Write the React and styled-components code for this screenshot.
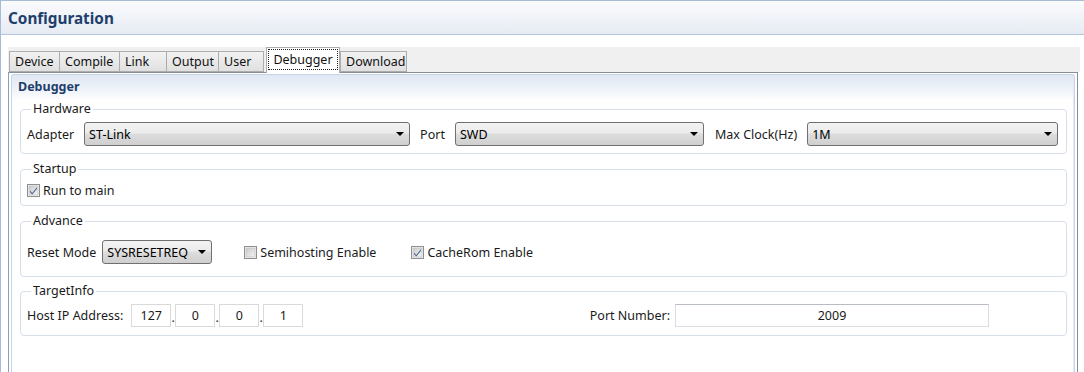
import React from "react";
import styled, { createGlobalStyle } from "styled-components";

const Global = createGlobalStyle`
  html, body { margin: 0; padding: 0; background: #ffffff; }
  body { font-family: "Noto Sans", "Liberation Sans", sans-serif; font-size: 12.5px; color: #1a1a1a; }
`;

const Page = styled.div`
  width: 1084px;
  height: 372px;
  box-sizing: border-box;
  border-top: 1px solid #a7bbd6;
  border-left: 1px solid #a7bbd6;
  overflow: hidden;
  background: #ffffff;
`;

const Header = styled.div`
  height: 34px;
  box-sizing: border-box;
  border-bottom: 1px solid #b6c7dc;
  background: linear-gradient(#fafbfd, #e6ebf3);
  display: flex;
  align-items: center;
  padding-left: 7px;
`;

const Title = styled.h1`
  margin: 0;
  font-size: 15.3px;
  font-weight: 700;
  color: #1e3e6c;
`;

const Body = styled.div`
  padding: 12px 4px 0 7px;
`;

const TabStrip = styled.div`
  height: 25px;
  background: #f0f0f0;
  display: flex;
  align-items: flex-end;
  padding-left: 1px;
  position: relative;
  z-index: 1;
`;

const Tab = styled.div`
  box-sizing: border-box;
  width: ${(p) => p.$w}px;
  height: ${(p) => (p.$active ? 26 : 21)}px;
  margin-left: ${(p) => p.$ml || 0}px;
  margin-bottom: ${(p) => (p.$active ? -1 : 0)}px;
  border: 1px solid #acacac;
  border-bottom: ${(p) => (p.$active ? "none" : "1px solid #acacac")};
  border-left: ${(p) => (p.$noLeft ? "none" : "1px solid #acacac")};
  background: ${(p) => (p.$active ? "#ffffff" : "linear-gradient(#f2f2f2, #e0e0e0)")};
  display: flex;
  align-items: ${(p) => (p.$active ? "flex-start" : "center")};
  padding: ${(p) => (p.$active ? "1px 1px 0" : "0 0 0 5px")};
  font-size: 12.5px;
  color: #111;
  white-space: nowrap;
`;

const Focus = styled.span`
  flex: 1;
  height: 21px;
  box-sizing: border-box;
  border: 1px dotted #222;
  display: flex;
  align-items: center;
  justify-content: center;
`;

const Panel = styled.div`
  box-sizing: border-box;
  width: 1070px;
  height: 320px;
  border: 1px solid #8a8e98;
  border-left-color: #8a9cb8;
  padding: 1px 2px 0 2px;
  background: #ffffff;
`;

const Inner = styled.div`
  height: 100%;
  box-sizing: border-box;
  border: 1px solid #c8d5e7;
  border-bottom: none;
  border-radius: 3px 3px 0 0;
  box-shadow: inset -1px 0 0 #e3eaf4;
  background: linear-gradient(#dfe7f3 0px, #f3f6fa 18px, #ffffff 26px);
  padding: 0 7px 0 8px;
`;

const SectionTitle = styled.div`
  height: 26px;
  line-height: 23px;
  margin-left: -2px;
  font-weight: 700;
  font-size: 12.5px;
  color: #1e3e6c;
`;

const Group = styled.fieldset`
  margin: ${(p) => p.$mt || 0}px 0 0 0;
  border: 1px solid #d6dfea;
  border-radius: 4px;
  padding: ${(p) => p.$pt}px 6px ${(p) => p.$pb}px 6px;
  min-width: 0;
`;

const Legend = styled.legend`
  padding: 0 2px;
  margin-left: 4px;
  font-size: 12.5px;
  line-height: 16px;
  color: #1a1a1a;
`;

const Row = styled.div`
  display: flex;
  align-items: center;
  gap: ${(p) => p.$gap ?? 10}px;
  height: ${(p) => p.$h || 24}px;
`;

const Label = styled.span`
  white-space: nowrap;
  color: #1a1a1a;
  margin-left: ${(p) => p.$ml || 0}px;
`;

const SelectBox = styled.div`
  box-sizing: border-box;
  width: ${(p) => p.$w}px;
  height: 24px;
  border: 1px solid #707070;
  border-radius: 3px;
  background: linear-gradient(#f3f3f3 0%, #ebebeb 45%, #dddddd 50%, #cfcfcf 100%);
  display: flex;
  align-items: center;
  justify-content: space-between;
  padding: 0 5px 0 4px;
  color: #000;
  margin-left: ${(p) => p.$ml || 0}px;
`;

const Arrow = styled.span`
  width: 0;
  height: 0;
  border-left: 4px solid transparent;
  border-right: 4px solid transparent;
  border-top: 4px solid #000;
`;

const Check = styled.label`
  display: flex;
  align-items: center;
  gap: 3px;
  margin-left: ${(p) => p.$ml || 0}px;
  white-space: nowrap;
`;

const IpBox = styled.div`
  box-sizing: border-box;
  width: 40px;
  height: 23px;
  border: 1px solid #dadada;
  display: flex;
  align-items: center;
  justify-content: center;
  color: #1a1a1a;
  margin-left: ${(p) => p.$ml || 0}px;
`;

const Dot = styled.span`
  width: 4px;
  text-align: center;
  align-self: flex-end;
  line-height: 18px;
`;

const Spacer = styled.div`
  flex: 1;
`;

const TextInput = styled.div`
  box-sizing: border-box;
  width: ${(p) => p.$w}px;
  height: 23px;
  border: 1px solid #dadde2;
  border-top-color: #b8bcc3;
  display: flex;
  align-items: center;
  justify-content: center;
  margin: 0 ${(p) => p.$mr || 0}px 0 ${(p) => p.$ml || 0}px;
  color: #1a1a1a;
`;

function CheckIcon({ checked }) {
  const id = checked ? "cg1" : "cg0";
  return (
    <svg width="13" height="13" viewBox="0 0 13 13">
      <defs>
        <linearGradient id={id} x1="0" y1="0" x2="1" y2="1">
          <stop offset="0" stopColor="#cbcbcb" />
          <stop offset="1" stopColor="#f4f4f4" />
        </linearGradient>
      </defs>
      <rect x="0.5" y="0.5" width="12" height="12" fill="#f4f4f4" stroke="#8e8f8f" />
      <rect x="2" y="2" width="9" height="9" fill={`url(#${id})`} stroke="#b9b9b9" strokeWidth="0.6" />
      {checked && (
        <path d="M3 6.4 L5.2 9 L10 3.2 L10 4.8 L5.2 10.4 L3 7.9 Z" fill="#3f5a92" />
      )}
    </svg>
  );
}

function Select({ value, w, ml }) {
  return (
    <SelectBox $w={w} $ml={ml}>
      <span>{value}</span>
      <Arrow />
    </SelectBox>
  );
}

const tabs = [
  { label: "Device", w: 51 },
  { label: "Compile", w: 60 },
  { label: "Link", w: 47 },
  { label: "Output", w: 52 },
  { label: "User", w: 45 },
  { label: "Debugger", w: 74, active: true },
  { label: "Download", w: 67 },
];

export default function App() {
  return (
    <>
      <Global />
      <Page>
        <Header>
          <Title>Configuration</Title>
        </Header>
        <Body>
          <TabStrip>
            {tabs.map((t, i) => (
              <Tab
                key={t.label}
                $w={t.w}
                $active={t.active}
                $noLeft={i > 0 && !t.active && !tabs[i - 1].active}
                $ml={t.active ? 2 : 0}
              >
                {t.active ? <Focus>{t.label}</Focus> : t.label}
              </Tab>
            ))}
          </TabStrip>
          <Panel>
            <Inner>
              <SectionTitle>Debugger</SectionTitle>
              <Group $pt={5} $pb={7}>
                <Legend>Hardware</Legend>
                <Row>
                  <Label>Adapter</Label>
                  <Select value="ST-Link" w={326} />
                  <Label>Port</Label>
                  <Select value="SWD" w={249} />
                  <Label $ml={1}>Max Clock(Hz)</Label>
                  <Select value="1M" w={251} />
                </Row>
              </Group>
              <Group $mt={7} $pt={4} $pb={6}>
                <Legend>Startup</Legend>
                <Row $h={18}>
                  <Check>
                    <CheckIcon checked />
                    <span>Run to main</span>
                  </Check>
                </Row>
              </Group>
              <Group $mt={7} $pt={11} $pb={12}>
                <Legend>Advance</Legend>
                <Row $gap={0}>
                  <Label>Reset Mode</Label>
                  <Select value="SYSRESETREQ" w={110} ml={6} />
                  <Check $ml={32}>
                    <CheckIcon />
                    <span>Semihosting Enable</span>
                  </Check>
                  <Check $ml={35}>
                    <CheckIcon checked />
                    <span>CacheRom Enable</span>
                  </Check>
                </Row>
              </Group>
              <Group $mt={6} $pt={5} $pb={8}>
                <Legend>TargetInfo</Legend>
                <Row $gap={0} $h={23}>
                  <Label>Host IP Address:</Label>
                  <IpBox $ml={8}>127</IpBox>
                  <Dot>.</Dot>
                  <IpBox>0</IpBox>
                  <Dot>.</Dot>
                  <IpBox>0</IpBox>
                  <Dot>.</Dot>
                  <IpBox>1</IpBox>
                  <Spacer />
                  <Label>Port Number:</Label>
                  <TextInput $w={314} $mr={71} $ml={5}>2009</TextInput>
                </Row>
              </Group>
            </Inner>
          </Panel>
        </Body>
      </Page>
    </>
  );
}
